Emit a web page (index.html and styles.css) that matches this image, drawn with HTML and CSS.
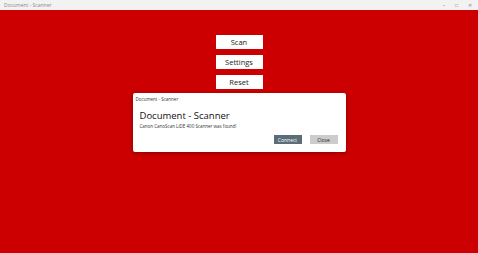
FILE: index.html
```html
<!DOCTYPE html>
<html lang="en">
<head>
    <meta charset="UTF-8">
    <title>Document - Scanner</title>
    <link rel="stylesheet" href="styles.css">
</head>
<body>
    <div class="titlebar">
        <span class="app-title">Document - Scanner</span>
        <div class="win-controls">
            <span>&#8211;</span>
            <span>&#9633;</span>
            <span>&#10005;</span>
        </div>
    </div>
    <main class="content">
        <div class="menu">
            <button class="menu-btn">Scan</button>
            <button class="menu-btn">Settings</button>
            <button class="menu-btn">Reset</button>
        </div>
        <div class="dialog">
            <div class="dialog-caption">Document - Scanner</div>
            <h1>Document - Scanner</h1>
            <p>Canon CanoScan LiDE 400 Scanner was found!</p>
            <div class="dialog-actions">
                <button class="btn-connect">Connect</button>
                <button class="btn-close">Close</button>
            </div>
        </div>
    </main>
</body>
</html>
```

FILE: styles.css
```css
html, body { margin: 0; height: 100%; }
body { font-family: "Open Sans", "Noto Sans", sans-serif; background: #cc0000; display: flex; flex-direction: column; }
.titlebar { height: 10px; background: #f2f2f2; display: flex; align-items: center; justify-content: space-between; padding: 0 6px 0 4px; }
.app-title { font-size: 5px; color: #888; }
.win-controls { display: flex; gap: 10px; font-size: 5px; color: #888; }
.content { flex: 1; display: flex; flex-direction: column; align-items: center; }
.menu { display: flex; flex-direction: column; gap: 6px; margin-top: 25px; }
.menu-btn { width: 47px; height: 14px; border: none; background: #fff; font-family: inherit; font-size: 7.5px; color: #222; padding: 0; }
.dialog { margin-top: 4px; width: 213px; height: 59px; box-sizing: border-box; background: #fff; border-radius: 2px; box-shadow: 0 1px 4px rgba(0,0,0,0.35); padding: 2px 8px 0 3px; }
.dialog-caption { font-size: 4.5px; color: #333; height: 10px; line-height: 8px; }
.dialog h1 { margin: 5px 0 0 4px; font-size: 9.5px; font-weight: normal; color: #111; line-height: 12px; }
.dialog p { margin: 1px 0 0 4px; font-size: 4.5px; color: #333; line-height: 7px; }
.dialog-actions { display: flex; justify-content: flex-end; gap: 8px; margin-top: 5px; }
.dialog-actions button { width: 28px; height: 9px; border: none; padding: 0; font-family: inherit; font-size: 5px; }
.btn-connect { background: #5b6d78; color: #fff; }
.btn-close { background: #cccccc; color: #222; }
```
